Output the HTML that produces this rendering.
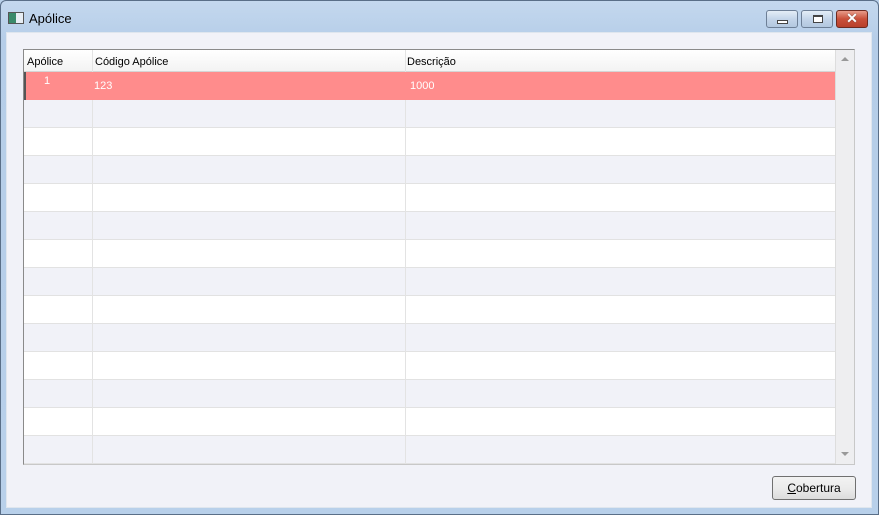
<!DOCTYPE html>
<html><head><meta charset="utf-8"><style>
*{margin:0;padding:0;box-sizing:border-box}
body{width:879px;height:515px;overflow:hidden;font-family:"Liberation Sans",sans-serif;font-size:11px;background:#b9d1ea;position:relative}
.frame{position:absolute;left:0;top:0;width:879px;height:515px;background:linear-gradient(#c4d8ee,#b5cde8 40px,#b8d0ea);border:1px solid #5a6f88;border-radius:6px 6px 0 0}
.title{position:absolute;left:29px;top:11px;font-size:13px;color:#000}
.icon{position:absolute;left:8px;top:12px;width:16px;height:12px;border:1px solid #555;background:linear-gradient(90deg,#3a8a6a 0 7px,#e8eef4 7px)}
.client{position:absolute;left:6px;top:32px;width:866px;height:476px;background:#f1f2f8;border:1px solid #dfe6ee}
.btn{position:absolute;top:10px;width:32px;height:18px;border:1px solid #6d7f96;border-radius:3px;background:linear-gradient(#e4edf7,#c4d5e9 50%,#b2c7df)}
.btn.c{background:linear-gradient(#e89c8a,#c9503a 50%,#b8402c);border-color:#6e2a20;width:32px}
.grid{position:absolute;left:23px;top:49px;width:832px;height:416px;border:1px solid #8a8a8a;border-right-color:#c8c8c8;border-bottom-color:#c8c8c8;background:#f1f2f8;overflow:hidden}
.hdr{position:absolute;left:0;top:0;width:811px;height:22px;background:linear-gradient(#fff,#f3f3f3);border-bottom:1px solid #d5d5d5}
.hdr span{position:absolute;top:6px;color:#000}
.row{position:absolute;left:0;width:811px;height:28px;border-bottom:1px solid #e2e2e2}
.vl{position:absolute;top:0;width:1px;height:416px;background:#e3e3e3}
.sb{position:absolute;left:811px;top:0;width:19px;height:414px;background:#eeeef0;border-left:1px solid #ddd}
.cob{position:absolute;left:772px;top:476px;width:84px;height:24px;border:1px solid #707070;border-radius:3px;background:linear-gradient(#f2f2f2,#ebebeb 50%,#dcdcdc);text-align:center;line-height:22px;font-size:12px}
</style></head><body>
<div class="frame"></div>
<div class="icon"></div>
<div class="title">Apólice</div>
<div class="btn" style="left:766px"><div style="position:absolute;left:10px;top:9px;width:11px;height:4px;border:1px solid #444;background:#fff"></div></div>
<div class="btn" style="left:801px"><div style="position:absolute;left:11px;top:4px;width:10px;height:8px;border:1px solid #444;border-top-width:2px;background:#fff"></div></div>
<div class="btn c" style="left:836px"><div style="position:absolute;left:0;top:-1px;width:30px;text-align:center;color:#fff;font-weight:bold;font-size:14px;text-shadow:0 0 1px #333">✕</div></div>
<div class="client"></div>
<div class="grid">
<div class="hdr"><span style="left:3px">Apólice</span><span style="left:71px">Código Apólice</span><span style="left:383px">Descrição</span></div>
<div class="row" style="top:22px;background:#ff8c8c;border-left:2px solid #555;left:1px;width:810px"></div>
<div class="row" style="top:50px"></div>
<div class="row" style="top:78px;background:#fff"></div>
<div class="row" style="top:106px"></div>
<div class="row" style="top:134px;background:#fff"></div>
<div class="row" style="top:162px"></div>
<div class="row" style="top:190px;background:#fff"></div>
<div class="row" style="top:218px"></div>
<div class="row" style="top:246px;background:#fff"></div>
<div class="row" style="top:274px"></div>
<div class="row" style="top:302px;background:#fff"></div>
<div class="row" style="top:330px"></div>
<div class="row" style="top:358px;background:#fff"></div>
<div class="row" style="top:386px"></div>
<div class="vl" style="left:68px"></div>
<div class="vl" style="left:381px"></div>
<div style="position:absolute;left:0;top:22px;width:811px;height:28px;background:#ff8c8c;border-left:2px solid #555;color:#fff">
<span style="position:absolute;left:18px;top:3px">1</span><span style="position:absolute;left:68px;top:8px">123</span><span style="position:absolute;left:384px;top:8px">1000</span></div>
<div class="sb"><div style="position:absolute;left:5px;top:7px;border:4px solid transparent;border-bottom:4px solid #999;border-top:0"></div><div style="position:absolute;left:5px;top:402px;border:4px solid transparent;border-top:4px solid #999;border-bottom:0"></div></div>
</div>
<div class="cob"><u>C</u>obertura</div>
</body></html>
